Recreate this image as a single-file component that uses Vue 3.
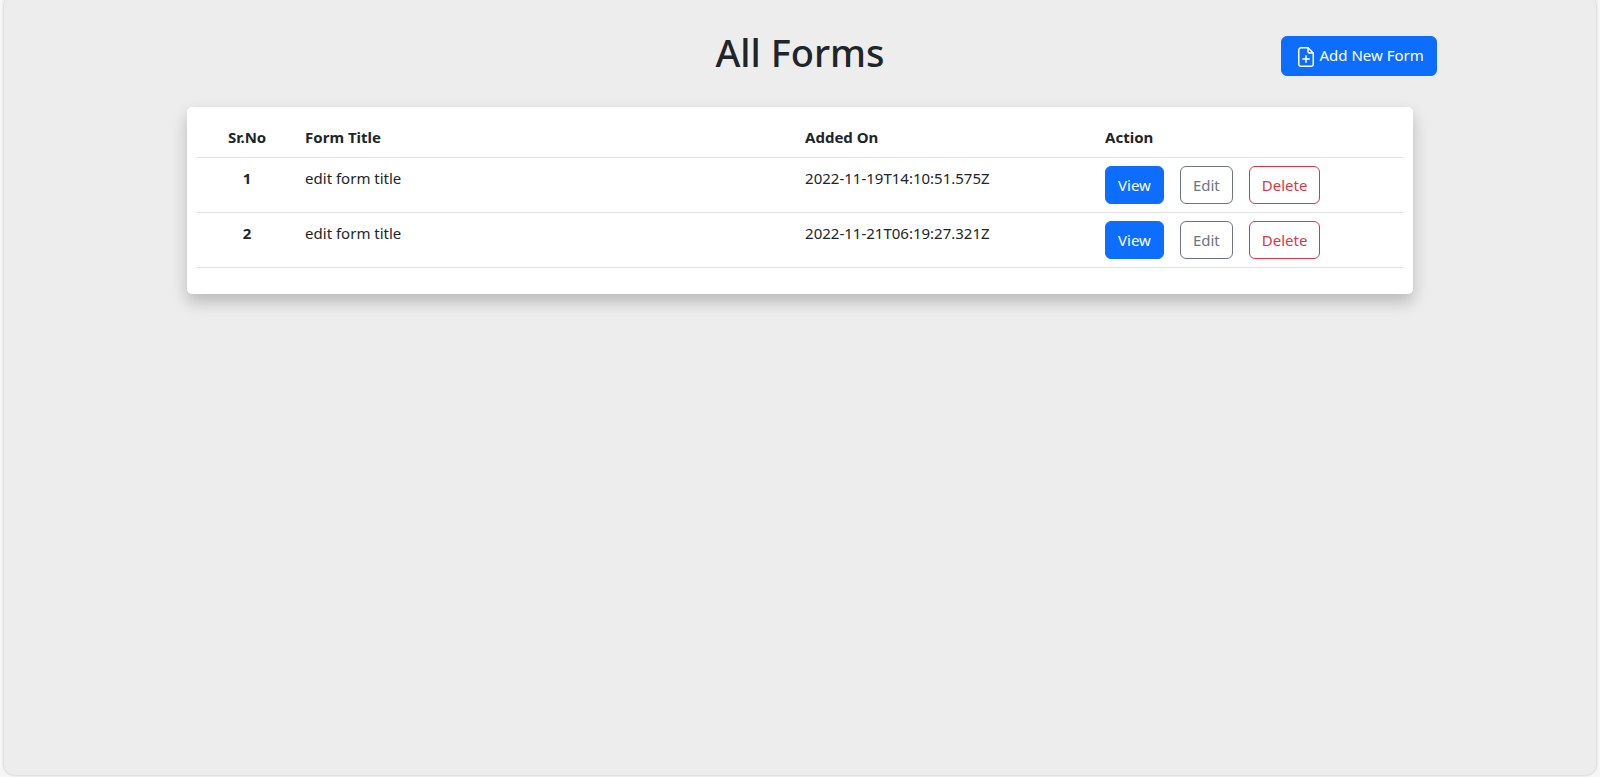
<script setup>
const forms = [
  { id: 1, title: 'edit form title', addedOn: '2022-11-19T14:10:51.575Z' },
  { id: 2, title: 'edit form title', addedOn: '2022-11-21T06:19:27.321Z' },
]
</script>

<template>
  <main class="panel">
    <header class="top">
      <h1>All Forms</h1>
      <button type="button" class="btn add">
        <svg viewBox="0 0 16 20" width="16" height="20" fill="none" stroke="currentColor" stroke-width="1.5" stroke-linejoin="round" stroke-linecap="round" aria-hidden="true">
          <path d="M10 .75H3A2.250 2.250 0 0 0 .75 3v14A2.250 2.250 0 0 0 3 19.250h10A2.250 2.250 0 0 0 15.250 17V6z" />
          <path d="M10 .75V4.500A1.500 1.500 0 0 0 11.500 6h3.750" />
          <path d="M8 8.750v6.500M4.750 12h6.500" />
        </svg>
        Add New Form
      </button>
    </header>

    <section class="card">
      <table>
        <thead>
          <tr>
            <th scope="col" class="num">Sr.No</th>
            <th scope="col" class="title">Form Title</th>
            <th scope="col" class="date">Added On</th>
            <th scope="col">Action</th>
          </tr>
        </thead>
        <tbody>
          <tr v-for="form in forms" :key="form.id">
            <th scope="row" class="num">{{ form.id }}</th>
            <td>{{ form.title }}</td>
            <td>{{ form.addedOn }}</td>
            <td>
              <div class="actions">
                <button type="button" class="btn primary">View</button>
                <button type="button" class="btn secondary">Edit</button>
                <button type="button" class="btn danger">Delete</button>
              </div>
            </td>
          </tr>
        </tbody>
      </table>
    </section>
  </main>
</template>

<style>
body {
  background: #f7f7f7;
}
#app {
  display: flow-root;
}
</style>

<style scoped>
.panel {
  box-sizing: border-box;
  min-height: calc(100vh + 3px);
  margin: -5px 4px 2px;
  padding-top: 41px;
  border-radius: 10px;
  background: #ededed;
  box-shadow: 0 0 3px rgba(0, 0, 0, 0.25);
  color: #212529;
  font-family: "Segoe UI", "Noto Sans", "Open Sans", sans-serif;
  font-size: 15px;
  line-height: 24px;
}

.top {
  display: grid;
  grid-template-columns: 1fr auto 1fr;
  align-items: start;
  width: 80%;
  margin: 0 auto 31px;
}

h1 {
  grid-column: 2;
  margin: -8px 0 0;
  font-size: 38px;
  line-height: 48px;
  font-weight: 500;
}

.btn {
  padding: 6px 12px;
  border: 1px solid;
  border-radius: 6px;
  font: inherit;
  cursor: pointer;
}

.add {
  display: flex;
  align-items: flex-start;
  justify-self: end;
  gap: 6px;
  height: 40px;
  padding-left: 16px;
  border-color: #0d6efd;
  background: #0d6efd;
  color: #fff;
}

.add svg {
  margin-top: 4px;
}

.card {
  box-sizing: border-box;
  width: 77%;
  margin: 0 auto;
  padding: 10px 10px 26px;
  border-radius: 5px;
  background: #fff;
  box-shadow: 0 8px 16px rgba(0, 0, 0, 0.22);
}

table {
  width: 100%;
  table-layout: fixed;
  border-collapse: separate;
  border-spacing: 0;
}

th,
td {
  padding: 8px;
  border-bottom: 1px solid #dee2e6;
  text-align: left;
  vertical-align: top;
}

th {
  font-weight: 700;
}

.num {
  text-align: center;
}

thead .num {
  width: 84px;
}

.title {
  width: 484px;
}

.date {
  width: 284px;
}

.actions {
  display: flex;
  gap: 16px;
}

.primary {
  border-color: #0d6efd;
  background: #0d6efd;
  color: #fff;
}

.secondary {
  border-color: #6c757d;
  background: transparent;
  color: #6c757d;
}

.danger {
  border-color: #dc3545;
  background: transparent;
  color: #dc3545;
}
</style>
